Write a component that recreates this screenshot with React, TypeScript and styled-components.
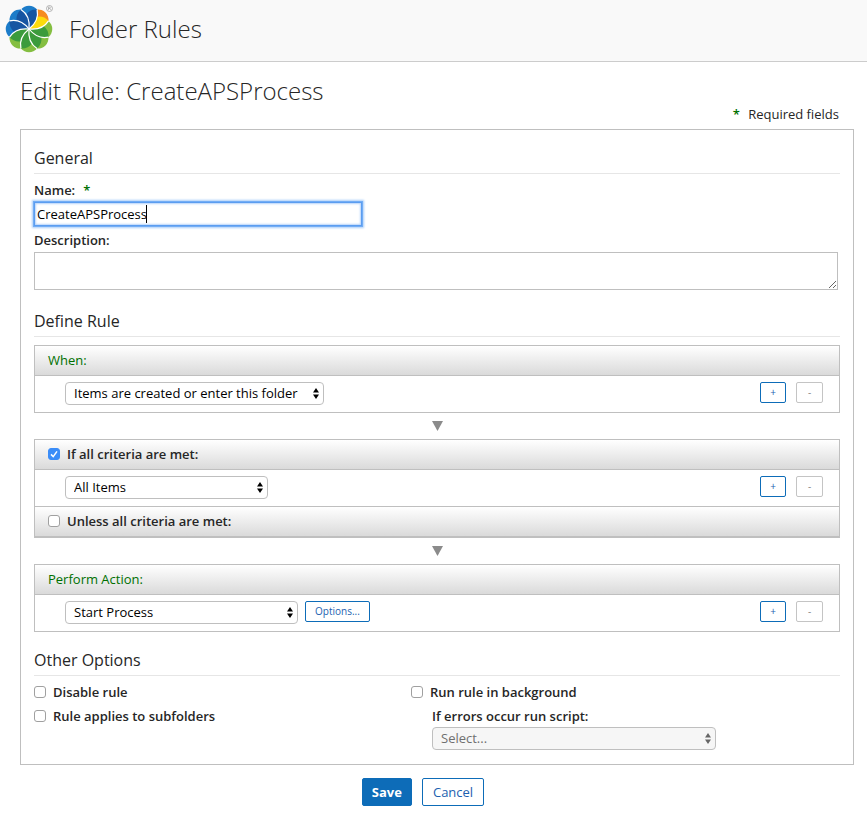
import React, { useState } from "react";
import styled, { createGlobalStyle, css } from "styled-components";

const Global = createGlobalStyle`
  *, *::before, *::after { box-sizing: border-box; }
  body {
    margin: 0;
    background: #fff;
    color: #262626;
    font-family: "Open Sans", "Noto Sans", sans-serif;
    font-size: 13px;
    line-height: 18px;
  }
  button, input, select, textarea { font: inherit; margin: 0; }
`;

const Header = styled.header`
  display: flex;
  align-items: flex-start;
  gap: 13px;
  height: 62px;
  padding: 4px 4px 0;
  background: #f9f9f9;
  border-bottom: 1px solid #ccc;
`;

const Title = styled.h1`
  margin: 8px 0 0;
  font-size: 24px;
  line-height: 34px;
  font-weight: 300;
`;

const Main = styled.main`
  padding: 15px 13px 7px 20px;
`;

const PageTitle = styled.h2`
  margin: 0;
  font-size: 24px;
  line-height: 28px;
  font-weight: 300;
`;

const Required = styled.p`
  margin: 0 15px 0 0;
  text-align: right;
`;

const Star = styled.span`
  margin: 0 5px 0 8px;
  font-weight: 600;
  color: #007000;
`;

const Panel = styled.div`
  margin-top: 6px;
  padding: 15px 13px 14px;
  border: 1px solid #bfbfbf;
`;

const Heading = styled.h3`
  margin: 0 0 7px;
  padding: 2px 0 4px;
  border-bottom: 1px solid #e6e6e6;
  font-size: 16px;
  line-height: 22px;
  font-weight: 400;
`;

const Section = styled.section`
  & + & { margin-top: 15px; }
`;

const Label = styled.label`
  display: flex;
  align-items: center;
  font-weight: 600;
`;

const NameField = styled.div`
  position: relative;
  width: 328px;
  margin: 3px 0 5px;
`;

const NameInput = styled.input`
  display: block;
  width: 100%;
  height: 24px;
  padding: 0 2px;
  border: 1px solid #5b9df0;
  outline: none;
  box-shadow: 0 0 0 1px #72adf5, 0 0 2px 2px #a9cdf9, inset 0 0 2px 1px #b5d3fa;
  color: #000;
`;

const Caret = styled.span`
  position: absolute;
  left: 112px;
  top: 3px;
  width: 1px;
  height: 18px;
  background: #000;
  pointer-events: none;
`;

const Description = styled.textarea`
  display: block;
  width: calc(100% - 2px);
  height: 38px;
  margin: 3px 0 18px;
  border: 1px solid #bfbfbf;
  outline: none;
`;

const Rule = styled.div`
  margin-top: 8px;
  border: 1px solid #bfbfbf;
`;

const Bar = styled.div<{ $divided?: boolean }>`
  display: flex;
  align-items: center;
  height: 30px;
  padding: 0 13px 2px;
  border-bottom: 1px solid #bfbfbf;
  background: linear-gradient(#fff, #dadada);
  color: #007000;
  ${(p) => p.$divided && css`height: 31px; border-top: 1px solid #bfbfbf;`}
`;

const Row = styled.div`
  display: flex;
  align-items: flex-start;
  height: 36px;
  padding: 6px 16px 0 30px;
`;

const Arrow = styled.svg`
  display: block;
  width: 11px;
  height: 10px;
  margin: 8px auto;
`;

const Actions = styled.div`
  display: flex;
  gap: 10px;
  margin-left: auto;
`;

const SelectWrap = styled.span<{ $width: number }>`
  position: relative;
  display: block;
  width: ${(p) => p.$width}px;
  svg {
    position: absolute;
    right: 5px;
    top: 6px;
    pointer-events: none;
  }
`;

const Select = styled.select`
  appearance: none;
  display: block;
  width: 100%;
  height: 23px;
  padding: 0 20px 2px 8px;
  border: 1px solid #bfbfbf;
  border-radius: 4px;
  background: #fff;
  color: #000;
  &:disabled { background: #f6f6f6; color: #6f6f6f; opacity: 1; }
`;

const Button = styled.button<{ $size?: "small" | "large"; $primary?: boolean }>`
  height: 28px;
  padding: 0 10px;
  border: 1px solid #0d6cb8;
  border-radius: 2px;
  background: ${(p) => (p.$primary ? "#0d6cb8" : "#fff")};
  color: ${(p) => (p.$primary ? "#fff" : "#1c5fb0")};
  ${(p) => p.$primary && css`
    padding: 0 9px;
    font-weight: 700;
  `}
  ${(p) => p.$size === "small" && css`
    height: 21px;
    min-width: 26px;
    padding: 0 9px 2px;
    font-size: 10px;
    line-height: 16px;
  `}
  &:disabled { min-width: 27px; border-color: #c4c4c4; color: #888; }
`;

const Check = styled.input`
  appearance: none;
  width: 12px;
  height: 12px;
  margin: 0 7px 0 0;
  border: 1px solid #a0a0a0;
  border-radius: 3px;
  background: #fff;
  &:checked {
    border-color: #3b8df8;
    background: #3b8df8 url("data:image/svg+xml,%3Csvg xmlns='http://www.w3.org/2000/svg' viewBox='0 0 10 10'%3E%3Cpath d='M2 5.4 4.2 7.6 8 2.4' fill='none' stroke='white' stroke-width='1.5'/%3E%3C/svg%3E");
  }
`;

const CheckLabel = styled(Label)`
  color: #262626;
`;

const Columns = styled.div`
  display: grid;
  grid-template-columns: 377px 1fr;
`;

const Column = styled.div`
  display: flex;
  flex-direction: column;
  gap: 6px;
`;

const Script = styled.div`
  display: flex;
  flex-direction: column;
  gap: 2px;
  margin-left: 21px;
`;

const Footer = styled.div`
  display: flex;
  justify-content: center;
  gap: 10px;
  margin: 13px 28px 0 0;
`;

const OptionsSlot = styled.div`
  display: flex;
  margin-left: 7px;
`;

const blue = { light: "#1c7cc9", dark: "#1655a2" };
const orange = { light: "#f68b1f", dark: "#fddb0d" };
const green = { light: "#84be41", dark: "#3b9b3c" };
const petals = [blue, orange, green, green, green, green, blue, blue];

function Logo() {
  return (
    <svg width="52" height="52" viewBox="-25 -25 52 52" aria-hidden="true">
      {petals.map((petal, i) => (
        <g key={i} transform={`rotate(${i * 45})`}>
          <path
            d="M0 0C5-4 10-11 8.100-19.500A10.500 10.500 0 0 0-8.100-19.400C-.7-14.800.7-6.400 0 0Z"
            fill={petal.light}
          />
          <path
            d="M0 0C5-4 10-11 8.100-19.500Q1-20-3-14.400C-.05-9.940.49-4.480 0 0Z"
            fill={petal.dark}
          />
        </g>
      ))}
      {petals.map((_, i) => (
        <path
          key={i}
          transform={`rotate(${i * 45})`}
          d="M0 0C5-4 10-11 8.100-19.500"
          fill="none"
          stroke="#fff"
          strokeWidth="1.200"
        />
      ))}
      <circle cx="20.500" cy="-20.500" r="3" fill="none" stroke="#999" strokeWidth=".7" />
      <path d="M19.500-19V-22H21Q22-21 21-20.500H19.500M21-20.500 22-19" fill="none" stroke="#999" strokeWidth=".6" />
    </svg>
  );
}

function Picker({ id, value, width, label, disabled }: { id: string; value: string; width: number; label?: string; disabled?: boolean }) {
  const color = disabled ? "#666" : "#000";
  return (
    <SelectWrap $width={width}>
      <Select id={id} aria-label={label} disabled={disabled}>
        <option>{value}</option>
      </Select>
      <svg width="6" height="11" viewBox="0 0 6 11" aria-hidden="true">
        <path d="M3 0 6 4.500H0ZM3 11 0 6.500H6Z" fill={color} />
      </svg>
    </SelectWrap>
  );
}

function AddRemove() {
  return (
    <Actions>
      <Button type="button" $size="small" aria-label="Add">+</Button>
      <Button type="button" $size="small" aria-label="Remove" disabled>-</Button>
    </Actions>
  );
}

function Down() {
  return (
    <Arrow viewBox="0 0 11 10" aria-hidden="true">
      <path d="M0 0H11L5.500 10Z" fill="#8b8b8b" />
    </Arrow>
  );
}

export default function App() {
  const [edited, setEdited] = useState(false);
  return (
    <>
      <Global />
      <Header>
        <Logo />
        <Title>Folder Rules</Title>
      </Header>
      <Main>
        <PageTitle>Edit Rule: CreateAPSProcess</PageTitle>
        <Required><Star>*</Star> Required fields</Required>
        <form onSubmit={(e) => e.preventDefault()}>
          <Panel>
            <Section>
              <Heading>General</Heading>
              <Label htmlFor="name">Name: <Star>*</Star></Label>
              <NameField>
                <NameInput id="name" defaultValue="CreateAPSProcess" onFocus={() => setEdited(true)} />
                {!edited && <Caret />}
              </NameField>
              <Label htmlFor="description">Description:</Label>
              <Description id="description" />
            </Section>
            <Section>
              <Heading>Define Rule</Heading>
              <Rule>
                <Bar>When:</Bar>
                <Row>
                  <Picker id="when" label="When" value="Items are created or enter this folder" width={259} />
                  <AddRemove />
                </Row>
              </Rule>
              <Down />
              <Rule>
                <Bar><CheckLabel><Check type="checkbox" defaultChecked />If all criteria are met:</CheckLabel></Bar>
                <Row>
                  <Picker id="criteria" label="Criteria" value="All Items" width={203} />
                  <AddRemove />
                </Row>
                <Bar $divided><CheckLabel><Check type="checkbox" />Unless all criteria are met:</CheckLabel></Bar>
              </Rule>
              <Down />
              <Rule>
                <Bar>Perform Action:</Bar>
                <Row>
                  <Picker id="action" label="Perform action" value="Start Process" width={233} />
                  <OptionsSlot><Button type="button" $size="small">Options...</Button></OptionsSlot>
                  <AddRemove />
                </Row>
              </Rule>
            </Section>
            <Section>
              <Heading>Other Options</Heading>
              <Columns>
                <Column>
                  <CheckLabel><Check type="checkbox" />Disable rule</CheckLabel>
                  <CheckLabel><Check type="checkbox" />Rule applies to subfolders</CheckLabel>
                </Column>
                <Column>
                  <CheckLabel><Check type="checkbox" />Run rule in background</CheckLabel>
                  <Script>
                    <Label htmlFor="script">If errors occur run script:</Label>
                    <Picker id="script" value="Select..." width={284} disabled />
                  </Script>
                </Column>
              </Columns>
            </Section>
          </Panel>
          <Footer>
            <Button type="submit" $primary>Save</Button>
            <Button type="button">Cancel</Button>
          </Footer>
        </form>
      </Main>
    </>
  );
}
